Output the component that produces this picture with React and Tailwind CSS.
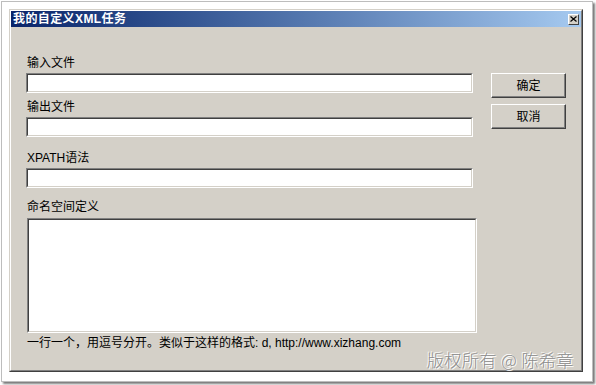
import React from "react";

const font = { fontFamily: "'Liberation Sans', 'Noto Sans CJK SC', sans-serif" };

function Sunken({ className }) {
  return (
    <div className={`border border-t-[#808080] border-l-[#808080] border-b-white border-r-white ${className}`}>
      <div className="w-full h-full border border-t-[#404040] border-l-[#404040] border-b-[#d4d0c8] border-r-[#d4d0c8] bg-white" />
    </div>
  );
}

function Button({ children }) {
  return (
    <div className="w-[75px] h-[25px] border border-t-white border-l-white border-b-[#404040] border-r-[#404040] shadow-[inset_-1px_-1px_#808080] flex items-center justify-center text-[12px] text-black">
      {children}
    </div>
  );
}

function Label({ children, className = "" }) {
  return <div className={`h-[16px] leading-[16px] text-[12px] text-black pl-[1px] ${className}`}>{children}</div>;
}

export default function App() {
  return (
    <div className="w-[596px] h-[385px] bg-white relative overflow-hidden" style={font}>
      <div className="ml-[1px] mt-[1px] w-[592px] h-[381px] border border-[#bdbdbd] bg-white shadow-[2px_2px_2px_#7a7a7a] p-[7px]">
        <div className="w-[574px] h-[363px] border border-t-[#d4d0c8] border-l-[#d4d0c8] border-b-[#404040] border-r-[#404040]">
          <div className="w-full h-full border border-t-white border-l-white border-b-[#808080] border-r-[#808080] flex flex-col">
            <div className="h-[16px] bg-gradient-to-r from-[#0a246a] to-[#a6caf0] flex items-center justify-between pl-[2px] pr-[2px]">
              <span className="text-white font-bold text-[12px] leading-[16px] tracking-[0.4px]">我的自定义XML任务</span>
              <div className="w-[11px] h-[11px] bg-[#d4d0c8] border border-t-white border-l-white border-b-[#404040] border-r-[#404040] flex items-center justify-center">
                <svg width="7" height="6" viewBox="0 0 7 6">
                  <path d="M0.5 0.5 L6.5 5.5 M6.5 0.5 L0.5 5.5" stroke="#000" strokeWidth="1.2" />
                </svg>
              </div>
            </div>
            <div className="flex-1 bg-[#d4d0c8] flex pl-[15px]">
              <div className="flex flex-col pt-[28px] w-[450px]">
                <Label>输入文件</Label>
                <Sunken className="w-[447px] h-[20px] mt-[2px]" />
                <Label className="mt-[6px]">输出文件</Label>
                <Sunken className="w-[447px] h-[20px] mt-[2px]" />
                <Label className="mt-[13px]">XPATH语法</Label>
                <Sunken className="w-[447px] h-[20px] mt-[2px]" />
                <Label className="mt-[11px]">命名空间定义</Label>
                <Sunken className="w-[450px] h-[115px] mt-[3px] ml-[1px]" />
                <Label className="mt-[2px]">一行一个，用逗号分开。类似于这样的格式: d, http://www.xizhang.com</Label>
              </div>
              <div className="flex flex-col gap-[6px] pt-[46px] ml-[15px]">
                <Button>确定</Button>
                <Button>取消</Button>
              </div>
            </div>
          </div>
        </div>
      </div>
      <div
        className="absolute left-[427px] top-[350px] text-[17px] leading-[20px] text-[#8c8c8c] font-light tracking-[0.5px] whitespace-nowrap [text-shadow:-1px_-1px_0_#ffffff,1px_1px_0_#ffffff]"
        style={{ fontFamily: "'Noto Sans CJK SC', 'Liberation Sans', sans-serif" }}
      >
        版权所有 @ 陈希章
      </div>
    </div>
  );
}
